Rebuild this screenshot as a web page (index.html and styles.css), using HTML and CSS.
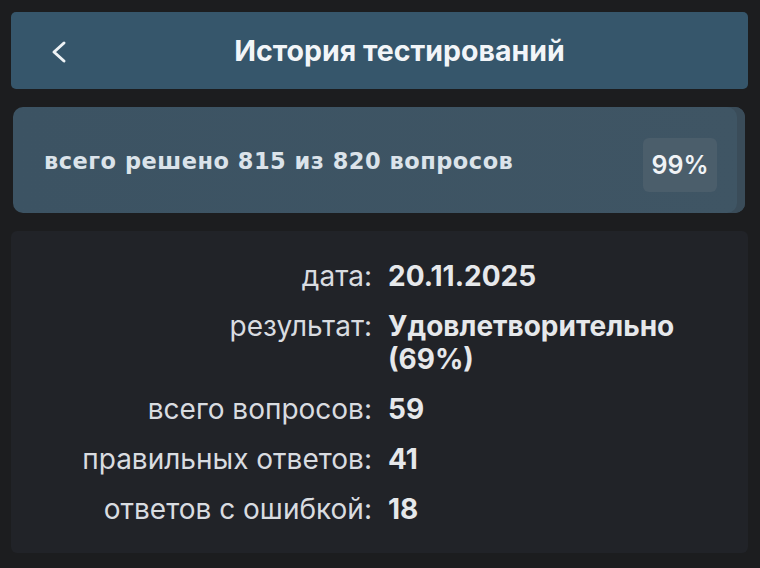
FILE: index.html
```html
<!DOCTYPE html>
<html lang="ru">
<head>
<meta charset="utf-8">
<link rel="stylesheet" href="styles.css">
</head>
<body>
<div class="page">
  <header class="topbar">
    <button class="back" aria-label="Назад">
      <svg width="16" height="24" viewBox="0 0 16 24"><path d="M13 3 L3 12 L13 21" fill="none" stroke="#eef2f5" stroke-width="3" stroke-linecap="round" stroke-linejoin="round"/></svg>
    </button>
    <h1 class="title">История тестирований</h1>
  </header>
  <section class="summary">
    <span class="summary-text">всего решено 815 из 820 вопросов</span>
    <span class="badge">99%</span>
  </section>
  <section class="details">
    <div class="label">дата:</div><div class="value">20.11.2025</div>
    <div class="label">результат:</div><div class="value">Удовлетворительно (69%)</div>
    <div class="label">всего вопросов:</div><div class="value">59</div>
    <div class="label">правильных ответов:</div><div class="value">41</div>
    <div class="label">ответов с ошибкой:</div><div class="value">18</div>
  </section>
</div>
</body>
</html>
```
FILE: styles.css
```css
* { box-sizing: border-box; }
html, body { margin: 0; padding: 0; }
body {
  background: #1c1d1f;
  font-family: Inter, "Noto Sans", "Liberation Sans", sans-serif;
  color: #e4e7ea;
  width: 760px;
  height: 568px;
  overflow: hidden;
}
.page {
  padding: 12px 12px 0 11px;
  display: flex;
  flex-direction: column;
}
.topbar {
  height: 77px;
  background: #36566b;
  border-radius: 5px;
  display: flex;
  align-items: center;
  justify-content: center;
  padding-left: 40px;
  position: relative;
}
.back {
  position: absolute;
  left: 40px;
  top: 28px;
  background: none;
  border: 0;
  padding: 0;
  width: 16px;
  height: 24px;
}
.back svg { display: block; }
.title {
  margin: 0;
  font-size: 28.5px;
  font-weight: 700;
  color: #f2f5f8;
  letter-spacing: 0;
}
.summary {
  margin: 18px 3px 0 2px;
  height: 106px;
  background: linear-gradient(90deg, #3c5363 0%, #3f5564 100%);
  border-radius: 10px;
  display: flex;
  align-items: flex-start;
  justify-content: space-between;
  padding: 31px 28px 0 31px;
  box-shadow: inset -8px 0 0 #3a4c59;
}
.summary-text {
  font-family: "DejaVu Sans", "Liberation Sans", sans-serif;
  font-size: 22.5px;
  line-height: 28px;
  font-weight: 700;
  letter-spacing: 0.5px;
  color: #dbe3ea;
  margin-top: 9px;
}
.badge {
  width: 74px;
  height: 54px;
  background: #4b5e6b;
  border-radius: 6px;
  display: flex;
  align-items: center;
  justify-content: center;
  font-size: 25px;
  font-weight: 600;
  color: #f0f3f6;
}
.details {
  margin-top: 18px;
  height: 322px;
  background: #212328;
  border-radius: 6px;
  display: grid;
  grid-template-columns: 350px 300px;
  column-gap: 16px;
  row-gap: 17px;
  align-content: start;
  padding: 29px 0 0 11px;
}
.label {
  text-align: right;
  font-size: 28px;
  line-height: 33px;
  color: #d9dce0;
}
.value {
  font-size: 28px;
  line-height: 33px;
  font-weight: 700;
  color: #e6e8eb;
}
```
